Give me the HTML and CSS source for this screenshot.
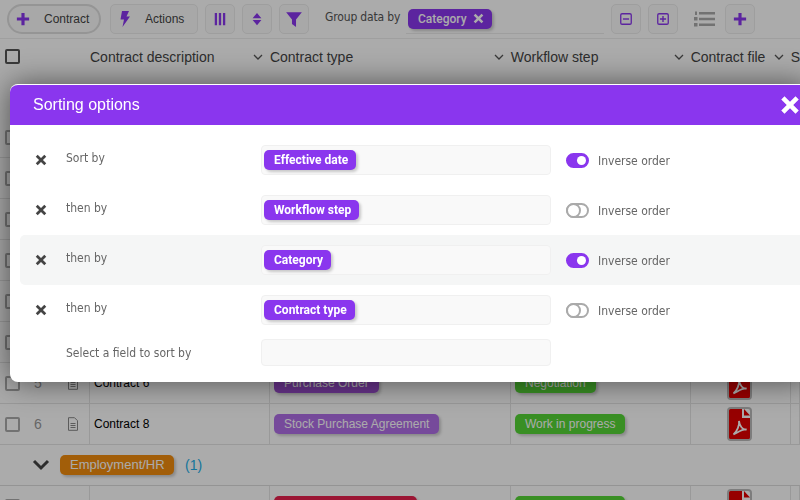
FILE: index.html
```html
<!DOCTYPE html>
<html lang="en">
<head>
    <meta charset="UTF-8">
    <title>Contracts</title>
    <link rel="stylesheet" href="styles.css">
</head>
<body>
    <svg class="defs" width="0" height="0">
        <symbol id="plus" viewBox="0 0 16 16"><path d="M6.200 1h3.600v5.200H15v3.600H9.800V15H6.200V9.800H1V6.200h5.200z"/></symbol>
        <symbol id="cross" viewBox="0 0 16 16"><path d="M3.600 1 8 5.400 12.400 1 15 3.600 10.600 8 15 12.400 12.400 15 8 10.600 3.600 15 1 12.400 5.400 8 1 3.600z"/></symbol>
        <symbol id="caret" viewBox="0 0 10 6"><path d="M1 1l4 4 4-4" fill="none" stroke="currentColor" stroke-width="1.300"/></symbol>
        <symbol id="pdf" viewBox="0 0 21 30"><path d="M1.500 0H13v9h8v19.500a1.500 1.500 0 0 1-1.500 1.500h-18A1.500 1.500 0 0 1 0 28.500v-27A1.500 1.500 0 0 1 1.500 0z" fill="#e10000"/><path d="M15 0l6 6.500h-6z" fill="#e10000"/><path d="M10 12c.8 4-2 10.500-5.500 13.500C8 24 13 20 17.500 20.500 14 21.500 10.500 17 10 12z" fill="none" stroke="#fff" stroke-width="1.800"/></symbol>
        <symbol id="doc" viewBox="0 0 12 14"><path d="M1.500.700h6l3 3v9.600h-9zM3.500 6.500h5M3.500 8.500h5M3.500 10.500h5" fill="none" stroke="currentColor" stroke-width="1"/></symbol>
    </svg>

    <div class="page">
        <div class="toolbar">
            <button class="tool tool-main"><svg class="ico"><use href="#plus"/></svg><span>Contract</span></button>
            <button class="tool tool-actions">
                <svg class="ico ico-bolt" viewBox="0 0 16 16"><path d="M5 0h7L9.500 5.500H13L5.500 16l1.500-7.500H3.500z"/></svg>
                <span>Actions</span>
            </button>
            <button class="tool tool-icon">
                <svg class="ico" viewBox="0 0 16 16"><path d="M2 1h2.600v14H2zM6.700 1h2.600v14H6.700zM11.400 1H14v14h-2.600z"/></svg>
            </button>
            <button class="tool tool-icon">
                <svg class="ico" viewBox="0 0 16 16"><path d="M8 1l5 6H3zM8 15l-5-6h10z"/></svg>
            </button>
            <button class="tool tool-icon">
                <svg class="ico ico-big" viewBox="0 0 16 16"><path d="M1 2h14L9.800 8.500V15L6.200 12.500v-4z"/></svg>
            </button>
            <span class="group-label">Group data by</span>
            <div class="group-box">
                <span class="chip chip-group">Category <svg class="chip-x"><use href="#cross"/></svg></span>
            </div>
            <button class="tool tool-icon">
                <svg class="ico" viewBox="0 0 16 16"><rect x="2" y="2" width="12" height="12" rx="1.500" fill="none" stroke="currentColor" stroke-width="1.500"/><path d="M4.500 7.200h7v1.600h-7z"/></svg>
            </button>
            <button class="tool tool-icon">
                <svg class="ico" viewBox="0 0 16 16"><rect x="2" y="2" width="12" height="12" rx="1.500" fill="none" stroke="currentColor" stroke-width="1.500"/><path d="M4.500 7.200h2.700V4.500h1.600v2.700h2.700v1.600H8.800v2.700H7.200V8.800H4.500z"/></svg>
            </button>
            <svg class="list-ico" viewBox="0 0 21 16"><path d="M5 1h16v2.500H5zM5 6.800h16v2.500H5zM5 12.500h16V15H5zM1 .500h2v3.500H1zM0 6h3.500v3.500H0zM0 12h3.500v3.500H0z"/></svg>
            <button class="tool tool-icon"><svg class="ico"><use href="#plus"/></svg></button>
        </div>

        <div class="table-head">
            <span class="check check-head"></span>
            <span class="th th-first">Contract description</span>
            <svg class="caret"><use href="#caret"/></svg><span class="th th-type">Contract type</span>
            <svg class="caret"><use href="#caret"/></svg><span class="th th-step">Workflow step</span>
            <svg class="caret"><use href="#caret"/></svg><span class="th th-file">Contract file</span>
            <svg class="caret"><use href="#caret"/></svg><span class="th">S</span>
        </div>

        <div class="spacer"></div>

        <!-- rows hidden behind the modal -->
        <div class="row"><div class="cell-select"><span class="check"></span></div><div></div><div></div><div></div><div></div><div></div></div>
        <div class="row"><div class="cell-select"><span class="check"></span></div><div></div><div></div><div></div><div></div><div></div></div>
        <div class="row"><div class="cell-select"><span class="check"></span></div><div></div><div></div><div></div><div></div><div></div></div>
        <div class="row"><div class="cell-select"><span class="check"></span></div><div></div><div></div><div></div><div></div><div></div></div>
        <div class="row"><div class="cell-select"><span class="check"></span></div><div></div><div></div><div></div><div></div><div></div></div>
        <div class="row"><div class="cell-select"><span class="check"></span></div><div></div><div></div><div></div><div></div><div></div></div>

        <div class="row">
            <div class="cell-select"><span class="check"></span><span class="num">5</span><svg class="doc"><use href="#doc"/></svg></div>
            <div class="cell-name">Contract 6</div>
            <div class="cell"><span class="chip chip-order">Purchase Order</span></div>
            <div class="cell"><span class="chip chip-green">Negotiation</span></div>
            <div class="cell-file"><span class="pdf"><svg><use href="#pdf"/></svg></span></div>
            <div></div>
        </div>
        <div class="row">
            <div class="cell-select"><span class="check"></span><span class="num">6</span><svg class="doc"><use href="#doc"/></svg></div>
            <div class="cell-name">Contract 8</div>
            <div class="cell"><span class="chip chip-stock">Stock Purchase Agreement</span></div>
            <div class="cell"><span class="chip chip-green">Work in progress</span></div>
            <div class="cell-file"><span class="pdf"><svg><use href="#pdf"/></svg></span></div>
            <div></div>
        </div>
        <div class="group-row">
            <svg class="group-caret" viewBox="0 0 18 12"><path d="M2 2l7 7 7-7" fill="none" stroke="currentColor" stroke-width="3"/></svg>
            <span class="chip chip-orange">Employment/HR</span>
            <span class="group-count">(1)</span>
        </div>
        <div class="row">
            <div class="cell-select"><span class="check"></span></div>
            <div class="cell-name"></div>
            <div class="cell"><span class="chip chip-red"></span></div>
            <div class="cell"><span class="chip chip-green chip-blank"></span></div>
            <div class="cell-file"><span class="pdf"><svg><use href="#pdf"/></svg></span></div>
            <div></div>
        </div>
    </div>

    <div class="overlay"></div>

    <div class="modal">
        <div class="modal-head">
            <span>Sorting options</span>
            <svg class="modal-close"><use href="#cross"/></svg>
        </div>
        <div class="modal-body">
            <div class="sort-row">
                <svg class="sort-x"><use href="#cross"/></svg>
                <span class="sort-label">Sort by</span>
                <div class="sort-box"><span class="chip chip-sort">Effective date</span></div>
                <span class="toggle on"></span>
                <span class="inverse">Inverse order</span>
            </div>
            <div class="sort-row">
                <svg class="sort-x"><use href="#cross"/></svg>
                <span class="sort-label">then by</span>
                <div class="sort-box"><span class="chip chip-sort">Workflow step</span></div>
                <span class="toggle"></span>
                <span class="inverse">Inverse order</span>
            </div>
            <div class="sort-row sort-row-hover">
                <svg class="sort-x"><use href="#cross"/></svg>
                <span class="sort-label">then by</span>
                <div class="sort-box"><span class="chip chip-sort">Category</span></div>
                <span class="toggle on"></span>
                <span class="inverse">Inverse order</span>
            </div>
            <div class="sort-row">
                <svg class="sort-x"><use href="#cross"/></svg>
                <span class="sort-label">then by</span>
                <div class="sort-box"><span class="chip chip-sort">Contract type</span></div>
                <span class="toggle"></span>
                <span class="inverse">Inverse order</span>
            </div>
            <div class="sort-row sort-row-new">
                <span></span>
                <span class="sort-label">Select a field to sort by</span>
                <div class="sort-box"></div>
            </div>
        </div>
    </div>
</body>
</html>
```

FILE: styles.css
```css
html, body {
    margin: 0;
    padding: 0;
    height: 100%;
    overflow: hidden;
}
body {
    font-family: "Liberation Sans", Arial, sans-serif;
    font-size: 12px;
    background-color: #fff;
    color: #333;
}
.defs {
    display: block;
    height: 0;
}
.page {
    width: 800px;
    height: 500px;
    overflow: hidden;
}
.toolbar {
    display: flex;
    align-items: center;
    height: 39px;
    padding: 0 0 0 7px;
    box-sizing: border-box;
    background-color: #fff;
    border-bottom: 1px solid #eee;
}
.tool {
    display: flex;
    align-items: center;
    justify-content: center;
    height: 30px;
    width: 30px;
    margin-right: 7px;
    padding: 0;
    box-sizing: border-box;
    background-color: #fbfbfb;
    border: 1px solid #ececec;
    border-radius: 5px;
    color: #8a36ee;
    font-family: inherit;
    font-size: 12px;
}
.tool span {
    color: #444;
}
.tool-main {
    width: 94px;
    margin-right: 9px;
    justify-content: flex-start;
    padding-left: 7px;
    border: 2px solid #dedede;
    border-radius: 15px;
}
.tool-main span {
    margin-left: 14px;
}
.tool-actions {
    width: 88px;
    justify-content: flex-start;
    padding-left: 6px;
}
.tool-actions span {
    margin-left: 12px;
}
.ico {
    flex: none;
    width: 14px;
    height: 14px;
    fill: currentColor;
}
.ico-bolt {
    width: 16px;
    height: 16px;
}
.ico-big {
    width: 18px;
    height: 18px;
}
.group-label {
    margin: 0 5px 4px 9px;
    font-family: "DejaVu Sans Condensed", "DejaVu Sans", sans-serif;
    font-size: 12px;
    letter-spacing: -0.15px;
    color: #555;
    width: 76px;
    white-space: nowrap;
}
.group-box {
    display: flex;
    align-items: center;
    width: 198px;
    height: 30px;
    padding-left: 2px;
    margin-right: 7px;
    box-sizing: border-box;
    border-bottom: 1px solid #ececec;
}
.chip {
    display: inline-block;
    height: 20px;
    line-height: 20px;
    padding: 0 10px;
    border-radius: 5px;
    color: #fff;
    white-space: nowrap;
    box-shadow: 2px 2px 3px rgba(0, 0, 0, 0.2);
}
.chip-group {
    width: 84px;
    box-sizing: border-box;
    background-color: #8a36ee;
    font-family: Roboto, sans-serif;
    font-weight: 500;
}
.chip-x {
    width: 11px;
    height: 11px;
    margin-left: 3px;
    vertical-align: -1px;
    fill: #fff;
}
.list-ico {
    width: 21px;
    height: 16px;
    margin: 0 10px 0 9px;
    fill: #aaa;
}
.table-head {
    display: flex;
    align-items: center;
    height: 35px;
    font-size: 14px;
    color: #444;
}
.th {
    white-space: nowrap;
}
.th-first {
    width: 163px;
}
.th-type {
    width: 224px;
}
.th-step {
    width: 163px;
}
.th-file {
    width: 83px;
}
.caret {
    flex: none;
    width: 10px;
    height: 6px;
    margin-right: 7px;
    color: #555;
}
.check {
    display: block;
    flex: none;
    width: 15px;
    height: 15px;
    margin-left: 5px;
    box-sizing: border-box;
    background-color: #fff;
    border: 2px solid #aaa;
    border-radius: 2px;
}
.check-head {
    margin-right: 70px;
    border-color: #555;
}
.spacer {
    height: 43px;
}
.row {
    display: grid;
    grid-template-columns: 90px 180px 241px 180px 100px 9px;
    height: 41px;
    box-sizing: border-box;
    border-bottom: 1px solid #e4e4e4;
    font-size: 12px;
}
.row > div {
    display: flex;
    align-items: center;
    border-right: 1px solid #e4e4e4;
    box-sizing: border-box;
}
.cell-name {
    padding-left: 4px;
    color: #000;
}
.cell {
    padding-left: 4px;
}
.cell-file {
    justify-content: center;
}
.num {
    width: 33px;
    margin-left: 14px;
    font-size: 14px;
    color: #999;
}
.doc {
    width: 12px;
    height: 14px;
    color: #888;
}
.pdf {
    display: block;
    width: 25px;
    height: 34px;
    padding: 0;
    margin-left: -3px;
    box-sizing: border-box;
    background-color: #fff;
    border: 2px solid #bbb;
    border-radius: 4px;
}
.pdf svg {
    display: block;
    width: 21px;
    height: 30px;
}
.chip-order {
    background-color: #9c4dd0;
}
.chip-stock {
    background-color: #b16fe8;
}
.chip-green {
    background-color: #55d636;
}
.chip-blank {
    width: 110px;
    box-sizing: border-box;
}
.chip-orange {
    background-color: #f28c0e;
}
.chip-red {
    width: 143px;
    box-sizing: border-box;
    background-color: #e8214e;
}
.group-row {
    display: flex;
    align-items: center;
    height: 41px;
    padding-left: 32px;
    box-sizing: border-box;
    border-bottom: 1px solid #ddd;
    font-size: 14px;
}
.group-row .chip {
    height: 20px;
    width: 114px;
    box-sizing: border-box;
    font-size: 13px;
}
.group-caret {
    width: 18px;
    height: 12px;
    margin-right: 10px;
    color: #444;
}
.group-count {
    margin-left: 11px;
    color: #23aee8;
}
.overlay {
    position: fixed;
    top: 0;
    left: 0;
    right: 0;
    bottom: 0;
    background-color: rgba(0, 0, 0, 0.33);
}
.modal {
    position: absolute;
    top: 84px;
    left: 10px;
    width: 800px;
    height: 298px;
    overflow: hidden;
    background-color: #fff;
    border-radius: 8px;
    border-top: 1px solid #fff;
    box-sizing: border-box;
    box-shadow: 0 0 30px rgba(0, 0, 0, 0.55);
}
.modal-head {
    display: flex;
    align-items: center;
    justify-content: space-between;
    height: 40px;
    padding: 0 10px 0 23px;
    background-color: #8a36ee;
    color: #fff;
    font-size: 16px;
}
.modal-close {
    width: 20px;
    height: 20px;
    fill: #fff;
}
.modal-body {
    padding: 10px 0 0 10px;
}
.sort-row {
    display: grid;
    grid-template-columns: 46px 195px 290px 47px 1fr;
    align-items: center;
    height: 50px;
    border-radius: 5px;
}
.sort-row-hover {
    background-color: #f5f6f6;
}
.sort-row-new {
    height: 34px;
}
.sort-x {
    width: 12px;
    height: 12px;
    margin-left: 15px;
    fill: #444;
}
.sort-label {
    margin-bottom: 4px;
    font-family: "DejaVu Sans Condensed", "DejaVu Sans", sans-serif;
    font-size: 12px;
    color: #666;
}
.sort-row-new .sort-label {
    margin: 2px 0 0;
}
.sort-box {
    display: flex;
    align-items: center;
    height: 30px;
    padding-left: 2px;
    box-sizing: border-box;
    background-color: #f9f9f9;
    border: 1px solid #f0f0f0;
    border-radius: 4px;
}
.sort-row-new .sort-box {
    height: 27px;
}
.chip-sort {
    padding-right: 8px;
    line-height: 21px;
    background-color: #8a36ee;
    font-family: Roboto, sans-serif;
    font-weight: 700;
}
.toggle {
    display: block;
    position: relative;
    width: 23px;
    height: 15px;
    margin-left: 15px;
    box-sizing: border-box;
    border: 2px solid #aaa;
    border-radius: 8px;
    background-color: #fff;
}
.toggle::after {
    content: "";
    position: absolute;
    top: -2px;
    left: -2px;
    width: 11px;
    height: 11px;
    border: 2px solid #aaa;
    border-radius: 50%;
    background-color: #fff;
}
.toggle.on {
    border-color: #8a36ee;
    background-color: #8a36ee;
}
.toggle.on::after {
    top: 1px;
    left: auto;
    right: 1px;
    width: 9px;
    height: 9px;
    border: 0;
}
.inverse {
    padding-top: 2px;
    font-family: "DejaVu Sans Condensed", "DejaVu Sans", sans-serif;
    font-size: 12px;
    color: #666;
}
```
